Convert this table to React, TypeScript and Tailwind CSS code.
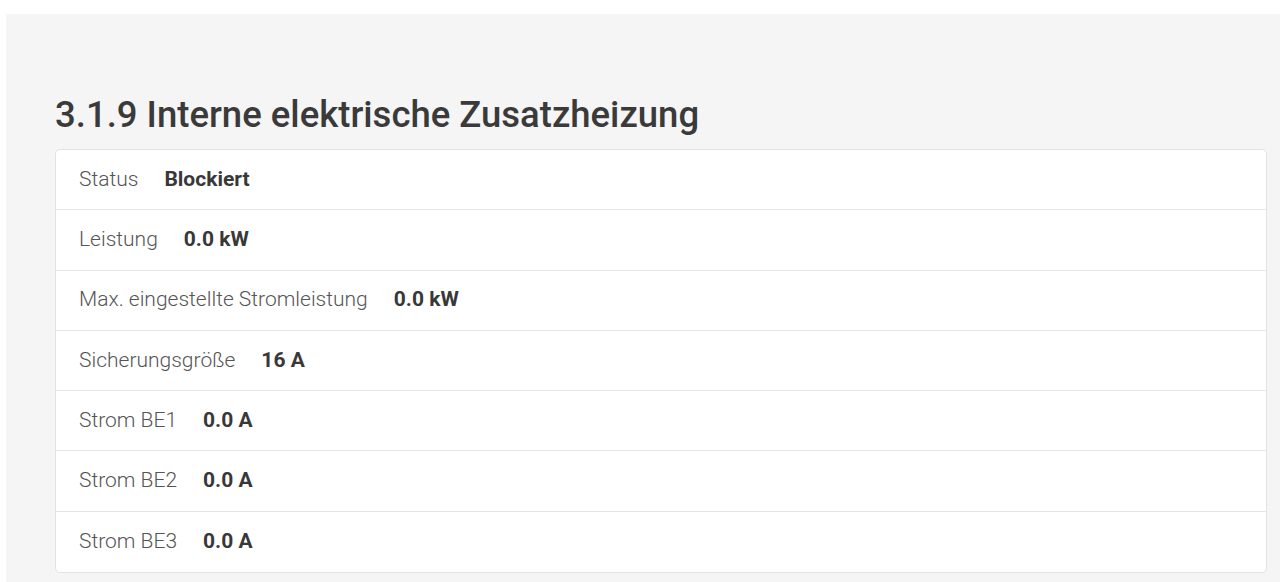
import React from "react"

const rows = [
  { label: "Status", value: "Blockiert" },
  { label: "Leistung", value: "0.0 kW" },
  { label: "Max. eingestellte Stromleistung", value: "0.0 kW" },
  { label: "Sicherungsgröße", value: "16 A" },
  { label: "Strom BE1", value: "0.0 A" },
  { label: "Strom BE2", value: "0.0 A" },
  { label: "Strom BE3", value: "0.0 A" },
]

export default function App() {
  return (
    <div className="w-full min-h-[582px] bg-white pt-[14px] pl-[6px] font-['Roboto',sans-serif]">
      <div className="min-h-[568px] bg-[#f5f5f5] pl-[49px] pr-[13px] pt-[71px]">
        {/* Section title */}
        <h2 className="text-[36.5px] leading-[60px] font-medium text-[#3a3a3a] mb-[4px]">
          3.1.9 Interne elektrische Zusatzheizung
        </h2>

        {/* Info list */}
        <div className="bg-white border border-[#e3e3e3] rounded-[5px]">
          {rows.map((row, i) => (
            <div
              key={row.label}
              className={
                "h-[60.3px] flex items-center gap-[26px] px-[23px] text-[21px] " +
                (i < rows.length - 1 ? "border-b border-[#e6e6e6]" : "")
              }
            >
              <span className="font-light text-[#555555]">{row.label}</span>
              <span className="font-bold text-[#383838]">{row.value}</span>
            </div>
          ))}
        </div>
      </div>
    </div>
  )
}
